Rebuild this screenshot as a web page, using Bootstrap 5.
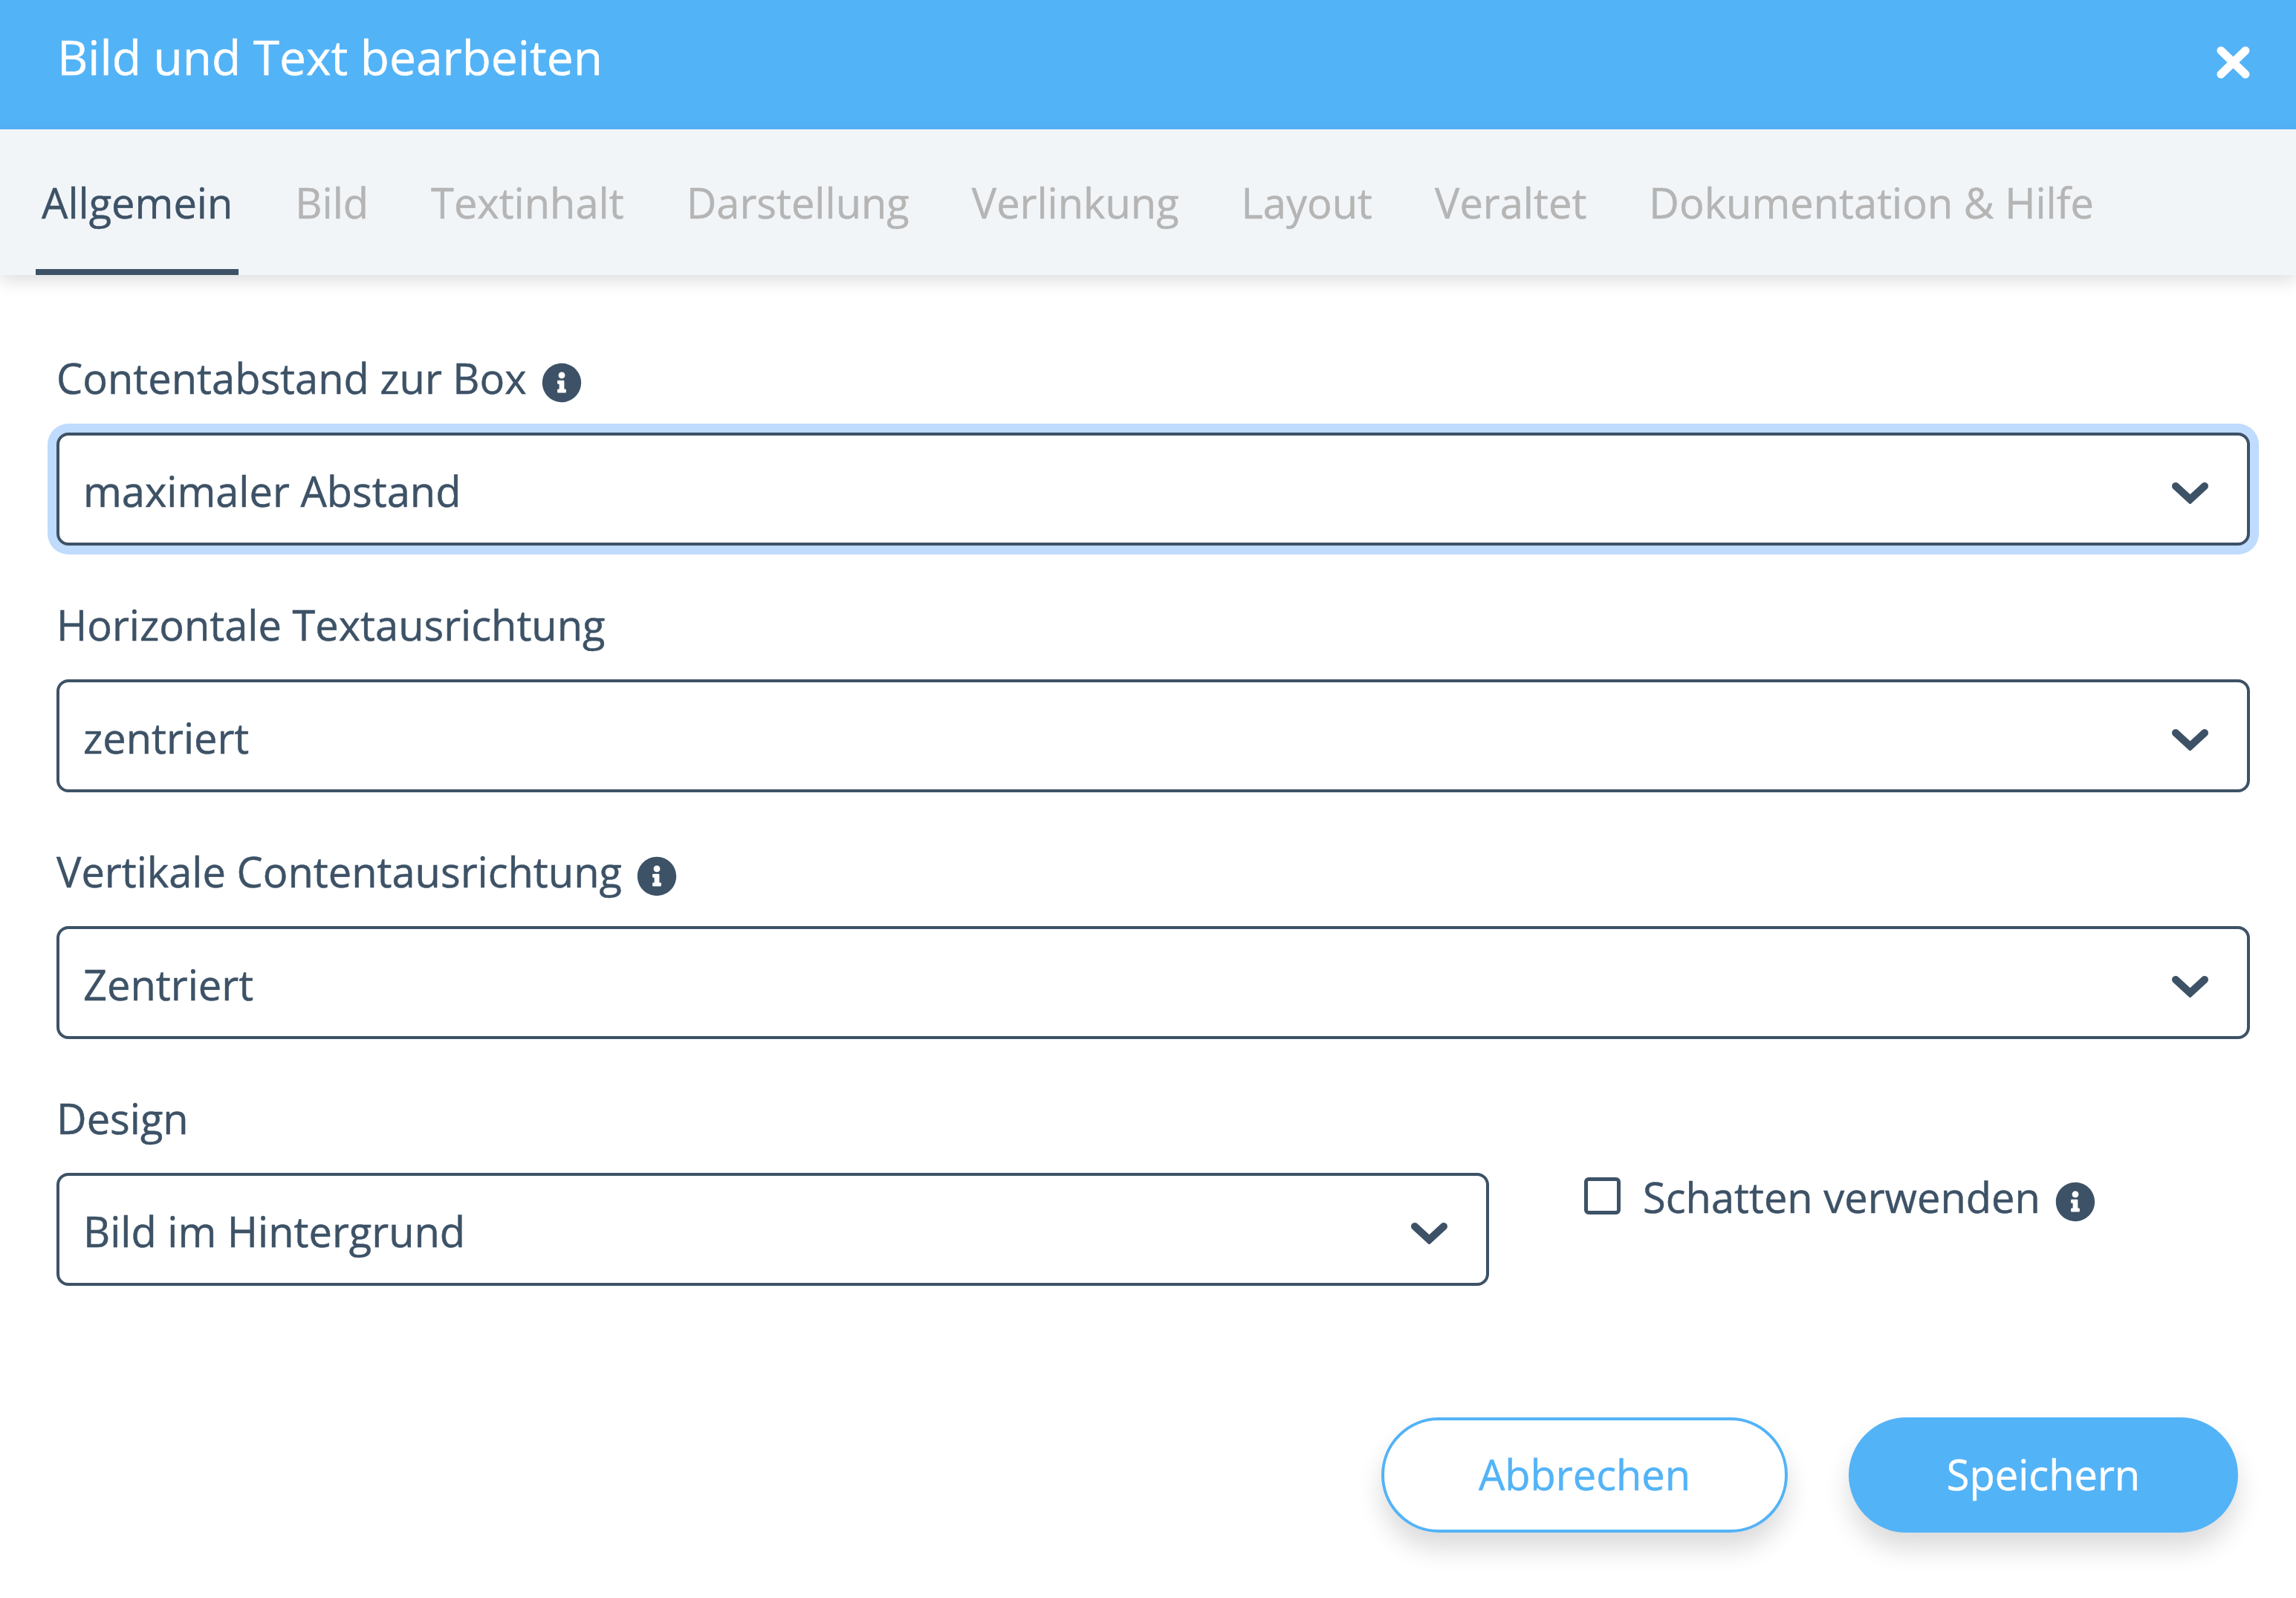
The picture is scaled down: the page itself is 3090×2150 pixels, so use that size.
<!DOCTYPE html>
<html lang="de">
<head>
    <meta charset="UTF-8">
    <title>Bild und Text bearbeiten</title>
    <link href="https://cdn.jsdelivr.net/npm/bootstrap@5.3.3/dist/css/bootstrap.min.css" rel="stylesheet">
    <style>
        body { font-family: "Open Sans", "Liberation Sans", sans-serif; color: #3d5266; font-size: 56px; background: #fff; -webkit-text-stroke: .5px; }
        .dlg-head { height: 174px; background: #53b3f7; padding: 35px 62px 0 77px; }
        .dlg-title { font-size: 64px; line-height: 84px; color: #fff; margin: 0; font-weight: 400; }
        .dlg-close { width: 45px; height: 44px; margin-top: 27px; border: 0; padding: 0; background: none; line-height: 0; }
        .tab-bar { height: 196px; background: #f2f5f8; padding-left: 48px; gap: 68px; box-shadow: 0 8px 22px rgba(0,0,0,.13); }
        .tab-bar .nav-link { height: 196px; padding: 60px 8px 0; line-height: 76px; font-size: 56px; color: #b5b5b5; border-bottom: 8px solid transparent; }
        .tab-bar .nav-link.active { color: #3d5266; border-bottom-color: #3d5266; }
        .dlg-body { padding: 100px 62px 88px 76px; }
        .field-row { margin-bottom: 68px; }
        .field-label { font-size: 56px; line-height: 76px; margin: 0 0 36px 0; color: #3d5266; }
        .info-ico { width: 54px; height: 54px; margin-left: 6px; vertical-align: -12px; fill: #3d5266; -webkit-text-stroke: 0; }
        .sel-box.form-select {
            height: 152px; font-size: 56px; line-height: 76px; color: #3d5266;
            font-family: inherit;
            border: 4px solid #3d5266; border-radius: 16px;
            padding: 34px 120px 30px 32px;
            background-image: url("data:image/svg+xml,%3csvg xmlns='http://www.w3.org/2000/svg' viewBox='0 0 49 30'%3e%3cpath fill='none' stroke='%233d5266' stroke-width='10' stroke-linecap='round' d='M5 6l19.500 18L44 6'/%3e%3c/svg%3e");
            background-size: 49px 30px;
            background-position: right 52px top 62px;
        }
        .sel-box.sel-on { box-shadow: 0 0 0 12px #bfdbfd; }
        .design-col { width: 1928px; }
        .shadow-col { padding: 118px 0 0 128px; }
        .chk-box.form-check-input { width: 49px; height: 50px; margin: 0; flex: none; border: 5px solid #3d5266; border-radius: 6px; background-color: #fff; }
        .chk-label { font-size: 56px; line-height: 52px; margin-left: 30px; }
        .foot-row { margin-top: 177px; gap: 82px; padding-right: 16px; }
        .foot-btn.btn { height: 155px; font-size: 56px; font-family: inherit; box-shadow: 0 22px 34px rgba(0,0,0,.14); border: 4px solid #53b3f7; padding: 0 0 4px; }
        .btn-cancel.btn { width: 547px; background: #fff; color: #53b3f7; }
        .btn-save.btn { width: 524px; background: #53b3f7; color: #fff; }
    </style>
</head>
<body>

<div class="dlg-head d-flex justify-content-between align-items-start">
    <h1 class="dlg-title">Bild und Text bearbeiten</h1>
    <button class="dlg-close" type="button" aria-label="Schließen">
        <svg width="45" height="44" viewBox="0 0 45 44"><path fill="none" stroke="#fff" stroke-width="11" stroke-linecap="round" d="M6 6l33 32M39 6L6 38"/></svg>
    </button>
</div>

<ul class="nav tab-bar">
    <li class="nav-item"><a class="nav-link active" href="#">Allgemein</a></li>
    <li class="nav-item"><a class="nav-link" href="#">Bild</a></li>
    <li class="nav-item"><a class="nav-link" href="#">Textinhalt</a></li>
    <li class="nav-item"><a class="nav-link" href="#">Darstellung</a></li>
    <li class="nav-item"><a class="nav-link" href="#">Verlinkung</a></li>
    <li class="nav-item"><a class="nav-link" href="#">Layout</a></li>
    <li class="nav-item"><a class="nav-link" href="#">Veraltet</a></li>
    <li class="nav-item"><a class="nav-link" href="#">Dokumentation &amp; Hilfe</a></li>
</ul>

<div class="dlg-body">
    <div class="field-row">
        <label class="field-label d-block">Contentabstand zur Box
            <svg class="info-ico" viewBox="0 0 512 512"><path d="M256 8C119 8 8 119.100 8 256c0 137 111 248 248 248s248-111 248-248C504 119.100 393 8 256 8zm0 110c23.200 0 42 18.800 42 42s-18.800 42-42 42-42-18.800-42-42 18.800-42 42-42zm56 254c0 6.600-5.400 12-12 12h-88c-6.600 0-12-5.400-12-12v-24c0-6.600 5.400-12 12-12h12v-64h-12c-6.600 0-12-5.400-12-12v-24c0-6.600 5.400-12 12-12h64c6.600 0 12 5.400 12 12v100h12c6.600 0 12 5.400 12 12v24z"/></svg>
        </label>
        <select class="form-select sel-box sel-on"><option>maximaler Abstand</option></select>
    </div>
    <div class="field-row">
        <label class="field-label d-block">Horizontale Textausrichtung</label>
        <select class="form-select sel-box"><option>zentriert</option></select>
    </div>
    <div class="field-row">
        <label class="field-label d-block">Vertikale Contentausrichtung
            <svg class="info-ico" viewBox="0 0 512 512"><path d="M256 8C119 8 8 119.100 8 256c0 137 111 248 248 248s248-111 248-248C504 119.100 393 8 256 8zm0 110c23.200 0 42 18.800 42 42s-18.800 42-42 42-42-18.800-42-42 18.800-42 42-42zm56 254c0 6.600-5.400 12-12 12h-88c-6.600 0-12-5.400-12-12v-24c0-6.600 5.400-12 12-12h12v-64h-12c-6.600 0-12-5.400-12-12v-24c0-6.600 5.400-12 12-12h64c6.600 0 12 5.400 12 12v100h12c6.600 0 12 5.400 12 12v24z"/></svg>
        </label>
        <select class="form-select sel-box"><option>Zentriert</option></select>
    </div>

    <div class="d-flex">
        <div class="design-col">
            <label class="field-label d-block">Design</label>
            <select class="form-select sel-box"><option>Bild im Hintergrund</option></select>
        </div>
        <div class="shadow-col d-flex align-items-start">
            <input class="form-check-input chk-box" type="checkbox" id="schatten">
            <label class="chk-label" for="schatten">Schatten verwenden
                <svg class="info-ico" viewBox="0 0 512 512"><path d="M256 8C119 8 8 119.100 8 256c0 137 111 248 248 248s248-111 248-248C504 119.100 393 8 256 8zm0 110c23.200 0 42 18.800 42 42s-18.800 42-42 42-42-18.800-42-42 18.800-42 42-42zm56 254c0 6.600-5.400 12-12 12h-88c-6.600 0-12-5.400-12-12v-24c0-6.600 5.400-12 12-12h12v-64h-12c-6.600 0-12-5.400-12-12v-24c0-6.600 5.400-12 12-12h64c6.600 0 12 5.400 12 12v100h12c6.600 0 12 5.400 12 12v24z"/></svg>
            </label>
        </div>
    </div>

    <div class="foot-row d-flex justify-content-end">
        <button class="btn rounded-pill foot-btn btn-cancel" type="button">Abbrechen</button>
        <button class="btn rounded-pill foot-btn btn-save" type="button">Speichern</button>
    </div>
</div>

<script src="https://cdn.jsdelivr.net/npm/bootstrap@5.3.3/dist/js/bootstrap.bundle.min.js"></script>
</body>
</html>
